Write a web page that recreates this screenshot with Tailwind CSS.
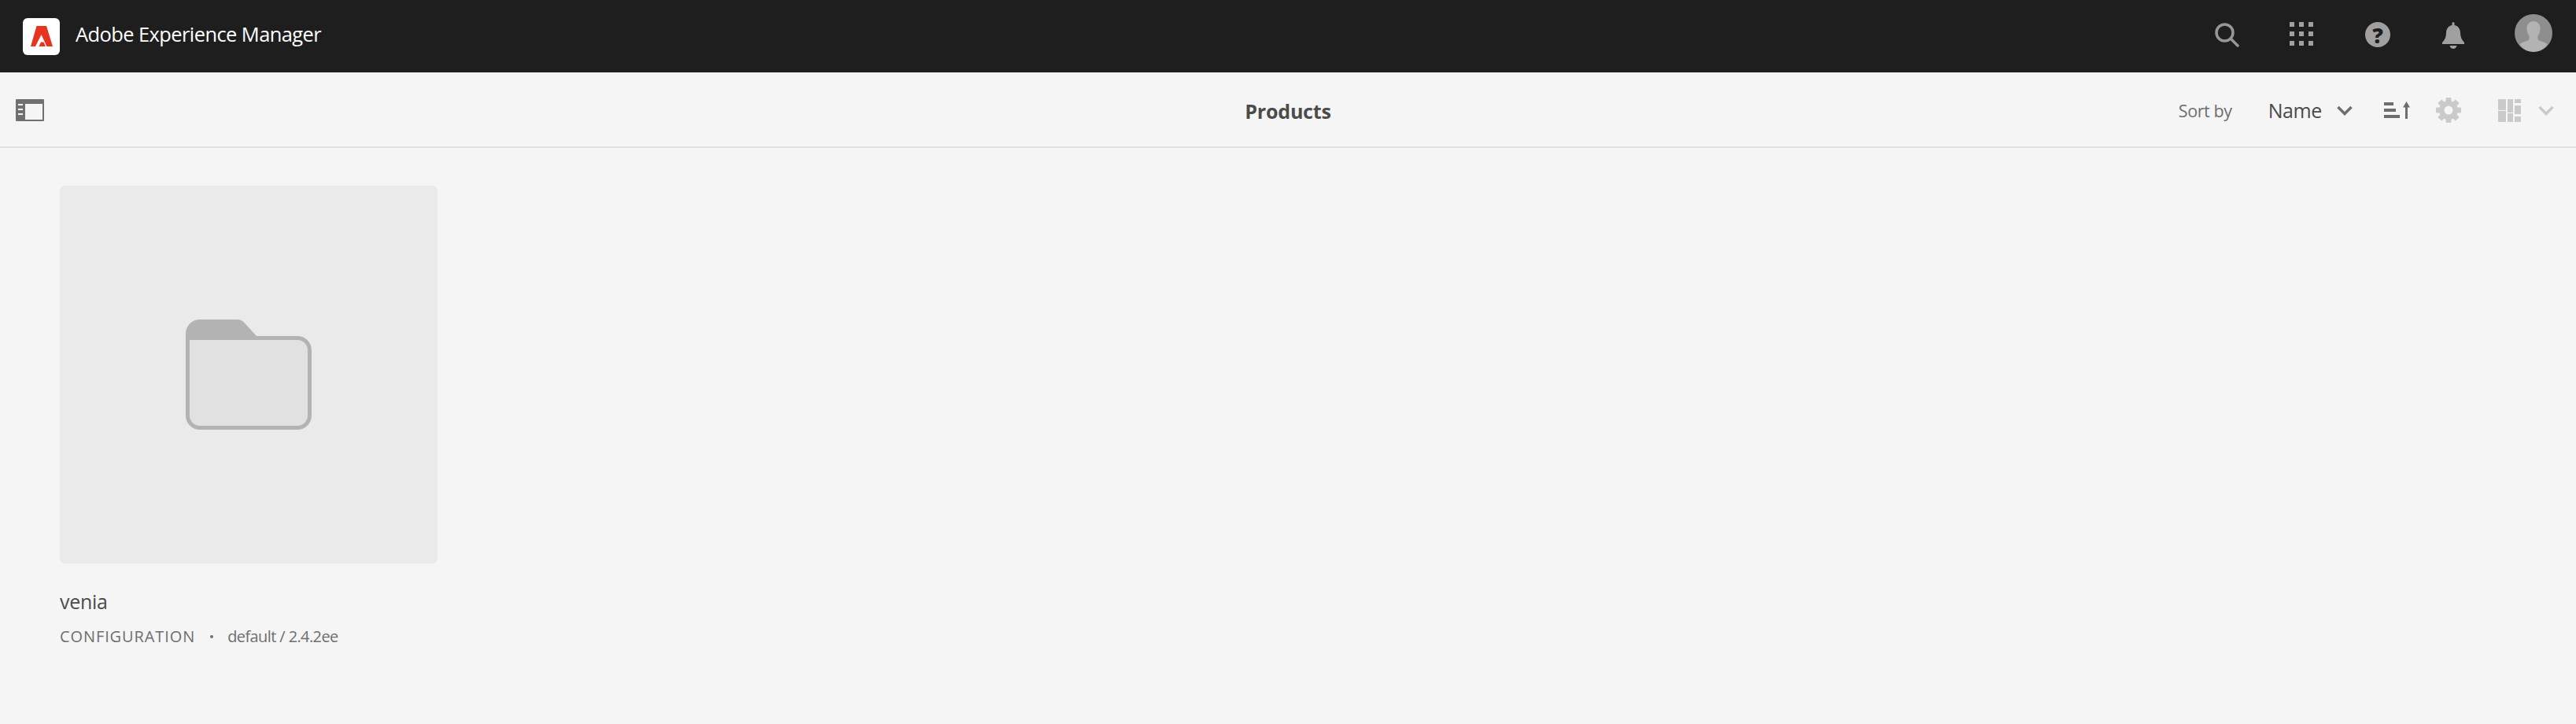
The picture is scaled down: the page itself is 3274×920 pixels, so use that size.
<!DOCTYPE html>
<html lang="en">
<head>
    <meta charset="UTF-8">
    <title>Adobe Experience Manager - Products</title>
    <script src="https://cdn.jsdelivr.net/npm/@tailwindcss/browser@4"></script>
</head>
<body class="bg-[#f5f5f5] h-[920px] overflow-hidden font-['Open_Sans',sans-serif]">
    <!-- shell header -->
    <header class="h-[92px] bg-[#1e1e1e] flex items-center pl-[29px]">
        <div class="w-[47px] h-[47px] bg-white rounded-[6px] flex items-center justify-center">
            <svg class="w-[28px] h-[26px]" viewBox="0 0 28 26"><path fill="#e8341f" d="M7.500 0H20L28 26H0z"/><path fill="#fff" d="M13.500 11L6 26H10.500L13 20.500H16.500L18.800 26H20.500z"/></svg>
        </div>
        <span class="ml-[20px] text-white text-[25.500px] tracking-[-0.6px] leading-none pb-[4px]">Adobe Experience Manager</span>
        <div class="ml-auto self-start flex items-start">
            <svg class="w-[32px] h-[32px] mt-[28px]" viewBox="0 0 32 32" fill="none" stroke="#969696" stroke-width="3.500"><circle cx="13.500" cy="13.500" r="10.500"/><path d="M21 21l9 9" stroke-linecap="round"/></svg>
            <svg class="w-[30px] h-[30px] ml-[64px] mt-[28px]" viewBox="0 0 30 30" fill="#a0a0a0"><rect width="6" height="6"/><rect x="12" width="6" height="6"/><rect x="24" width="6" height="6"/><rect y="12" width="6" height="6"/><rect x="12" y="12" width="6" height="6"/><rect x="24" y="12" width="6" height="6"/><rect y="24" width="6" height="6"/><rect x="12" y="24" width="6" height="6"/><rect x="24" y="24" width="6" height="6"/></svg>
            <div class="w-[32px] h-[32px] ml-[66px] mt-[28px] rounded-full bg-[#a0a0a0] flex items-center justify-center text-[#1e1e1e] text-[27px] font-extrabold leading-none">?</div>
            <svg class="w-[28px] h-[34px] ml-[66px] mt-[28px]" viewBox="0 0 28 34" fill="#a0a0a0"><path d="M12.500 1.500a1.500 1.500 0 0 1 3 0V4C20.500 5 23 9 23 14c0 5 2 9 5 12v2H0v-2c3-3 5-7 5-12 0-5 2.500-9 7.500-10z"/><path d="M9.500 30h9c-.5 2.500-2.500 4-4.500 4s-4-1.500-4.500-4z"/></svg>
            <div class="w-[48px] h-[48px] ml-[64px] mr-[30px] mt-[18px] rounded-full bg-[#8e8e8e] overflow-hidden">
                <svg class="w-full h-full" viewBox="0 0 48 48" fill="#b3b3b3"><path d="M24 9c5 0 8.500 3.500 8.500 9 0 4-1 7-3 9.500v5c3 2 9 3 12 5.500-3.500 6-10.500 10-17.500 10S10 44 6.500 38c3-2.500 9-3.500 12-5.500v-5c-2-2.500-3-5.500-3-9.500 0-5.500 3.500-9 8.500-9z"/></svg>
            </div>
        </div>
    </header>

    <!-- action bar -->
    <div class="relative h-[96px] border-b-2 border-[#e1e1e1] flex items-center pl-[20px] pt-[2px]">
        <svg class="w-[36px] h-[28px]" viewBox="0 0 36 28"><rect width="36" height="28" rx="1" fill="#707070"/><rect x="12" y="6" width="22" height="20" fill="#f5f5f5"/><path d="M3 7h6M3 13h6M3 19h6" stroke="#f5f5f5" stroke-width="2"/></svg>
        <h1 class="absolute left-0 right-0 text-center text-[#4b4b4b] text-[25px] font-bold tracking-[-0.2px] translate-y-[2px] pointer-events-none">Products</h1>
        <div class="ml-auto flex items-center">
            <span class="text-[#6e6e6e] text-[21.500px] tracking-[-0.4px] translate-y-[1px]">Sort by</span>
            <span class="ml-[46px] text-[#4b4b4b] text-[25px] tracking-[-0.4px] translate-y-[1px]">Name</span>
            <svg class="w-[20px] h-[13px] ml-[19px]" viewBox="0 0 20 13" fill="none" stroke="#6e6e6e" stroke-width="3.500"><path d="M1.500 2l8.500 8.500L18.500 2"/></svg>
            <svg class="w-[33px] h-[22px] ml-[40px]" viewBox="0 0 33 22" fill="#6e6e6e"><rect y="1" width="12" height="4"/><rect y="9" width="15" height="4"/><rect y="17" width="20" height="4"/><path d="M27 6v16h3V6zM28.500 0L24 7.500h9z"/></svg>
            <svg class="w-[32px] h-[32px] ml-[33px]" viewBox="0 0 32 32" fill="#cacaca"><circle cx="16" cy="16" r="12"/><g><rect x="12.500" y="0" width="7" height="32" rx="1"/><rect x="12.500" y="0" width="7" height="32" rx="1" transform="rotate(45 16 16)"/><rect x="12.500" y="0" width="7" height="32" rx="1" transform="rotate(90 16 16)"/><rect x="12.500" y="0" width="7" height="32" rx="1" transform="rotate(135 16 16)"/></g><circle cx="16" cy="16" r="5.500" fill="#f5f5f5"/></svg>
            <svg class="w-[29px] h-[29px] ml-[47px]" viewBox="0 0 29 29" fill="#cacaca"><rect width="10" height="14"/><rect y="15" width="10" height="14"/><rect x="12" width="7" height="17"/><rect x="12" y="18" width="7" height="11"/><rect x="21" width="8" height="5"/><rect x="21" y="8" width="8" height="11"/><rect x="21" y="22" width="8" height="7"/></svg>
            <svg class="w-[20px] h-[13px] ml-[22px] mr-[28px]" viewBox="0 0 20 13" fill="none" stroke="#cacaca" stroke-width="3.500"><path d="M1.500 2l8.500 8.500L18.500 2"/></svg>
        </div>
    </div>

    <!-- card grid -->
    <main class="pt-[48px] pl-[76px]">
        <div class="w-[480px]">
            <div class="h-[480px] bg-[#eaeaea] rounded-[6px] flex items-center justify-center">
                <svg class="w-[160px] h-[140px]" viewBox="0 0 160 140"><path d="M0 18A18 18 0 0 1 18 0H66a12 12 0 0 1 8 3.500L90 21H142A18 18 0 0 1 160 39V122A18 18 0 0 1 142 140H18A18 18 0 0 1 0 122z" fill="#b3b3b3"/><path d="M5 26H142A13 13 0 0 1 155 39V122A13 13 0 0 1 142 135H18A13 13 0 0 1 5 122z" fill="#e1e1e1"/></svg>
            </div>
            <div class="mt-[30px] text-[#4b4b4b] text-[25px] leading-[36px] tracking-[-0.3px]">venia</div>
            <div class="mt-[13px] flex items-center text-[#6e6e6e] text-[20px] leading-[28px]">
                <span class="tracking-[0.9px]">CONFIGURATION</span>
                <span class="w-[4px] h-[4px] rounded-full bg-[#6e6e6e] ml-[19px]"></span>
                <span class="ml-[18px] tracking-[-0.6px]">default / 2.4.2ee</span>
            </div>
        </div>
    </main>
</body>
</html>
